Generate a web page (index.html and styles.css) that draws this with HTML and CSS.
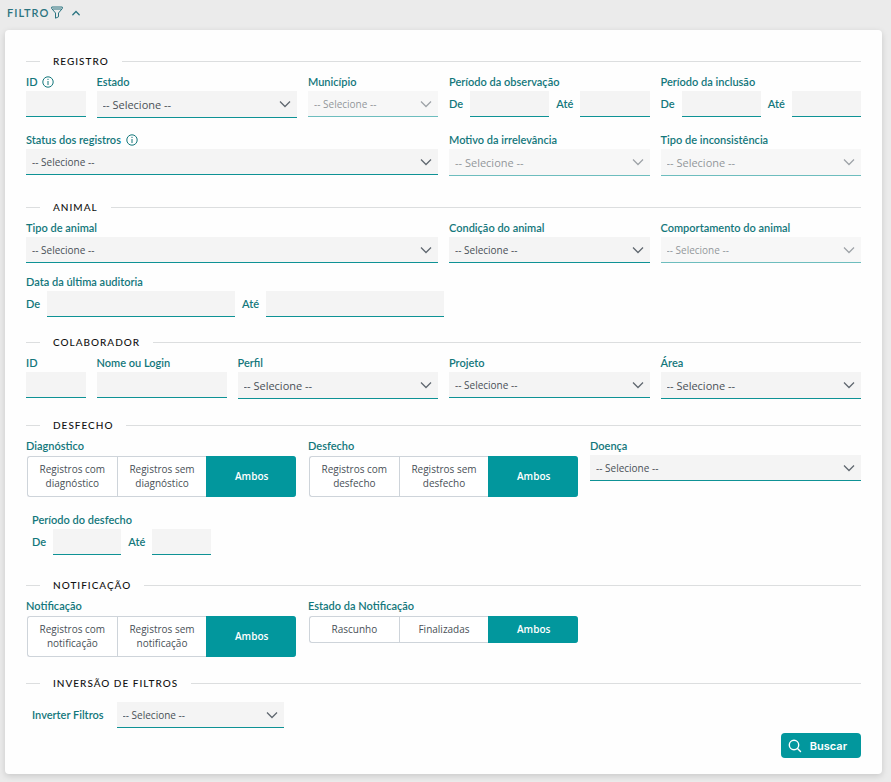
FILE: index.html
```html
<!DOCTYPE html>
<html lang="pt-BR">
<head>
  <meta charset="utf-8">
  <title>Filtro</title>
  <link rel="stylesheet" href="styles.css">
</head>
<body>
  <button type="button" class="toggle" aria-expanded="true">
    <span>FILTRO</span>
    <svg width="12" height="13" viewBox="0 0 12 13" fill="none" stroke="currentColor" stroke-linejoin="round">
      <path d="M.7 1h10.6v1.6L7.5 7v3.8l-3 1.4V7L.7 2.600z"/>
      <path d="M1.500 3h9"/>
    </svg>
    <svg class="caret" width="8" height="6" viewBox="0 0 8 6" fill="none" stroke="currentColor" stroke-width="1.300" stroke-linecap="round">
      <path d="M.8 4.800 4 1.500l3.200 3.300"/>
    </svg>
  </button>

  <form class="card">
    <section class="section section-registro">
      <h2>REGISTRO</h2>
      <div class="row">
        <div class="field col-1">
          <label for="id">ID
            <svg class="info" width="12" height="12" viewBox="0 0 12 12" fill="none" stroke="currentColor">
              <circle cx="6" cy="6" r="5.200"/>
              <path d="M6 5v4M6 2.800v1.200"/>
            </svg>
          </label>
          <input type="text" id="id">
        </div>
        <div class="field col-3">
          <label for="estado">Estado</label>
          <select id="estado" class="large"><option>-- Selecione --</option></select>
        </div>
        <div class="field col-2">
          <label for="municipio">Município</label>
          <select id="municipio" disabled><option>-- Selecione --</option></select>
        </div>
        <div class="field col-3" role="group" aria-labelledby="observacao">
          <span class="label" id="observacao">Período da observação</span>
          <div class="range">
            <label for="obs-de">De</label>
            <input type="text" id="obs-de">
            <label for="obs-ate">Até</label>
            <input type="text" id="obs-ate">
          </div>
        </div>
        <div class="field col-3" role="group" aria-labelledby="inclusao">
          <span class="label" id="inclusao">Período da inclusão</span>
          <div class="range">
            <label for="inc-de">De</label>
            <input type="text" id="inc-de">
            <label for="inc-ate">Até</label>
            <input type="text" id="inc-ate">
          </div>
        </div>
        <div class="field col-6">
          <label for="status">Status dos registros
            <svg class="info" width="12" height="12" viewBox="0 0 12 12" fill="none" stroke="currentColor">
              <circle cx="6" cy="6" r="5.200"/>
              <path d="M6 5v4M6 2.800v1.200"/>
            </svg>
          </label>
          <select id="status"><option>-- Selecione --</option></select>
        </div>
        <div class="field col-3">
          <label for="motivo">Motivo da irrelevância</label>
          <select id="motivo" class="large" disabled><option>-- Selecione --</option></select>
        </div>
        <div class="field col-3">
          <label for="inconsistencia">Tipo de inconsistência</label>
          <select id="inconsistencia" class="large" disabled><option>-- Selecione --</option></select>
        </div>
      </div>
    </section>

    <section class="section section-animal">
      <h2>ANIMAL</h2>
      <div class="row">
        <div class="field col-6">
          <label for="tipo-animal">Tipo de animal</label>
          <select id="tipo-animal"><option>-- Selecione --</option></select>
        </div>
        <div class="field col-3">
          <label for="condicao">Condição do animal</label>
          <select id="condicao"><option>-- Selecione --</option></select>
        </div>
        <div class="field col-3">
          <label for="comportamento">Comportamento do animal</label>
          <select id="comportamento" disabled><option>-- Selecione --</option></select>
        </div>
        <div class="field col-6 wide" role="group" aria-labelledby="auditoria">
          <span class="label" id="auditoria">Data da última auditoria</span>
          <div class="range">
            <label for="aud-de">De</label>
            <input type="text" id="aud-de">
            <label for="aud-ate">Até</label>
            <input type="text" id="aud-ate">
          </div>
        </div>
      </div>
    </section>

    <section class="section">
      <h2>COLABORADOR</h2>
      <div class="row">
        <div class="field col-1">
          <label for="colab-id">ID</label>
          <input type="text" id="colab-id">
        </div>
        <div class="field col-2">
          <label for="nome">Nome ou Login</label>
          <input type="text" id="nome">
        </div>
        <div class="field col-3">
          <label for="perfil">Perfil</label>
          <select id="perfil" class="large"><option>-- Selecione --</option></select>
        </div>
        <div class="field col-3">
          <label for="projeto">Projeto</label>
          <select id="projeto"><option>-- Selecione --</option></select>
        </div>
        <div class="field col-3">
          <label for="area">Área</label>
          <select id="area" class="large"><option>-- Selecione --</option></select>
        </div>
      </div>
    </section>

    <section class="section section-desfecho">
      <h2>DESFECHO</h2>
      <div class="row">
        <div class="field col-4" role="group" aria-labelledby="diagnostico">
          <span class="label" id="diagnostico">Diagnóstico</span>
          <div class="segmented">
            <button type="button">Registros com diagnóstico</button>
            <button type="button">Registros sem diagnóstico</button>
            <button type="button" class="active">Ambos</button>
          </div>
        </div>
        <div class="field col-4" role="group" aria-labelledby="desfecho">
          <span class="label" id="desfecho">Desfecho</span>
          <div class="segmented">
            <button type="button">Registros com desfecho</button>
            <button type="button">Registros sem desfecho</button>
            <button type="button" class="active">Ambos</button>
          </div>
        </div>
        <div class="field col-4">
          <label for="doenca">Doença</label>
          <select id="doenca"><option>-- Selecione --</option></select>
        </div>
        <div class="field col-3 inset" role="group" aria-labelledby="periodo">
          <span class="label" id="periodo">Período do desfecho</span>
          <div class="range">
            <label for="desf-de">De</label>
            <input type="text" id="desf-de">
            <label for="desf-ate">Até</label>
            <input type="text" id="desf-ate">
          </div>
        </div>
      </div>
    </section>

    <section class="section">
      <h2>NOTIFICAÇÃO</h2>
      <div class="row">
        <div class="field col-4" role="group" aria-labelledby="notificacao">
          <span class="label" id="notificacao">Notificação</span>
          <div class="segmented">
            <button type="button">Registros com notificação</button>
            <button type="button">Registros sem notificação</button>
            <button type="button" class="active">Ambos</button>
          </div>
        </div>
        <div class="field col-4" role="group" aria-labelledby="estado-notificacao">
          <span class="label" id="estado-notificacao">Estado da Notificação</span>
          <div class="segmented">
            <button type="button">Rascunho</button>
            <button type="button">Finalizadas</button>
            <button type="button" class="active">Ambos</button>
          </div>
        </div>
      </div>
    </section>

    <section class="section section-inversao">
      <h2>INVERSÃO DE FILTROS</h2>
      <div class="inline-field">
        <label for="inverter">Inverter Filtros</label>
        <select id="inverter"><option>-- Selecione --</option></select>
      </div>
    </section>

    <div class="actions">
      <button type="submit" class="search">
        <svg width="14" height="14" viewBox="0 0 14 14" fill="none" stroke="currentColor" stroke-width="1.400" stroke-linecap="round">
          <circle cx="6" cy="6" r="4.700"/>
          <path d="M9.500 9.500 12.500 12.500"/>
        </svg>
        <span>Buscar</span>
      </button>
    </div>
  </form>
</body>
</html>
```
FILE: styles.css
```css
* {
  box-sizing: border-box;
}
body {
  margin: 0;
  padding: 4px 9px 8px 5px;
  background: #ebebeb;
  color: #13777b;
  font-family: Lato, sans-serif;
  font-size: 11px;
}
button, input, select {
  margin: 0;
  font-family: "Open Sans", sans-serif;
}
.toggle {
  display: flex;
  align-items: center;
  gap: 2px;
  height: 17px;
  margin-bottom: 9px;
  padding: 0 2px;
  border: none;
  background: none;
  color: #2b7480;
  font: 600 11px Lato, sans-serif;
  letter-spacing: 1px;
  cursor: pointer;
}
.caret {
  margin-left: 7px;
}
.card {
  padding: 21px 21px 16px;
  border-radius: 4px;
  background: #fefefe;
  box-shadow: 0 2px 6px rgba(0, 0, 0, 0.15);
}
.section {
  margin-bottom: 16px;
}
.section h2 {
  display: flex;
  align-items: center;
  gap: 13px;
  margin: 0 0 2px;
  color: #111;
  font-size: 10px;
  font-weight: 500;
  line-height: 20px;
  letter-spacing: 1px;
}
.section h2::before,
.section h2::after {
  content: "";
  height: 1px;
  background: #dcdedf;
}
.section h2::before {
  width: 14px;
}
.section h2::after {
  flex: 1;
}
.row {
  display: grid;
  grid-template-columns: repeat(12, minmax(0, 1fr));
  gap: 13px 11px;
  align-items: start;
}
.section-registro {
  margin-bottom: 21px;
}
.section-animal {
  margin-bottom: 15px;
}
.section-animal .row {
  row-gap: 10px;
}
.section-desfecho {
  margin-bottom: 20px;
}
.section-desfecho .row {
  row-gap: 14px;
}
.section-inversao {
  margin-bottom: 5px;
}
.col-1 { grid-column: span 1; }
.col-2 { grid-column: span 2; }
.col-3 { grid-column: span 3; }
.col-4 { grid-column: span 4; }
.col-6 { grid-column: span 6; }
.field {
  display: flex;
  flex-direction: column;
}
.wide {
  margin-right: -6px;
}
.inset {
  padding: 0 16px 0 6px;
}
label, .label {
  font-weight: 600;
  line-height: 18px;
  white-space: nowrap;
}
.info {
  margin-left: 2px;
  vertical-align: -2px;
}
input, select {
  width: 100%;
  min-width: 0;
  height: 26px;
  padding: 0 6px;
  border: none;
  border-bottom: 1px solid #0e9295;
  border-radius: 0;
  background-color: #f4f4f4;
  color: #495057;
  font-size: 10px;
}
select {
  appearance: none;
  padding-right: 22px;
  background-image: url("data:image/svg+xml,%3Csvg xmlns='http://www.w3.org/2000/svg' viewBox='0 0 12 8' fill='none' stroke='%23606870' stroke-width='1.300'%3E%3Cpath d='M1 1.500 6 6.500 11 1.500'/%3E%3C/svg%3E");
  background-repeat: no-repeat;
  background-position: right 6px center;
  background-size: 12px 8px;
}
select.large {
  height: 27px;
  font-size: 11px;
}
select:disabled {
  opacity: 0.6;
}
.range {
  display: flex;
  align-items: center;
  gap: 7px;
}
.range input {
  flex: 1 1 12px;
}
.range input:first-of-type {
  flex-basis: 22px;
}
.segmented {
  display: flex;
  margin: 1px 1px 0;
}
.segmented button {
  flex: 1 1 0;
  min-width: 0;
  padding: 5px 8px 6px;
  border: 1px solid #ced4da;
  border-right: none;
  background: #fff;
  color: #495057;
  font-size: 10px;
  line-height: 14px;
  cursor: pointer;
}
.segmented button:first-child {
  border-radius: 3px 0 0 3px;
}
.segmented button:last-child {
  border-radius: 0 3px 3px 0;
}
.segmented .active {
  border-color: #02979d;
  background: #02979d;
  color: #fff;
  font-weight: 600;
}
.inline-field {
  display: flex;
  align-items: center;
  gap: 13px;
  padding: 7px 6px 0;
}
.inline-field select {
  width: 167px;
}
.actions {
  display: flex;
  justify-content: flex-end;
}
.search {
  display: flex;
  align-items: center;
  gap: 8px;
  height: 25px;
  padding: 0 14px 0 7px;
  border: none;
  border-radius: 4px;
  background: #02979d;
  color: #fff;
  font: 600 11px Inter, sans-serif;
  cursor: pointer;
}
```
